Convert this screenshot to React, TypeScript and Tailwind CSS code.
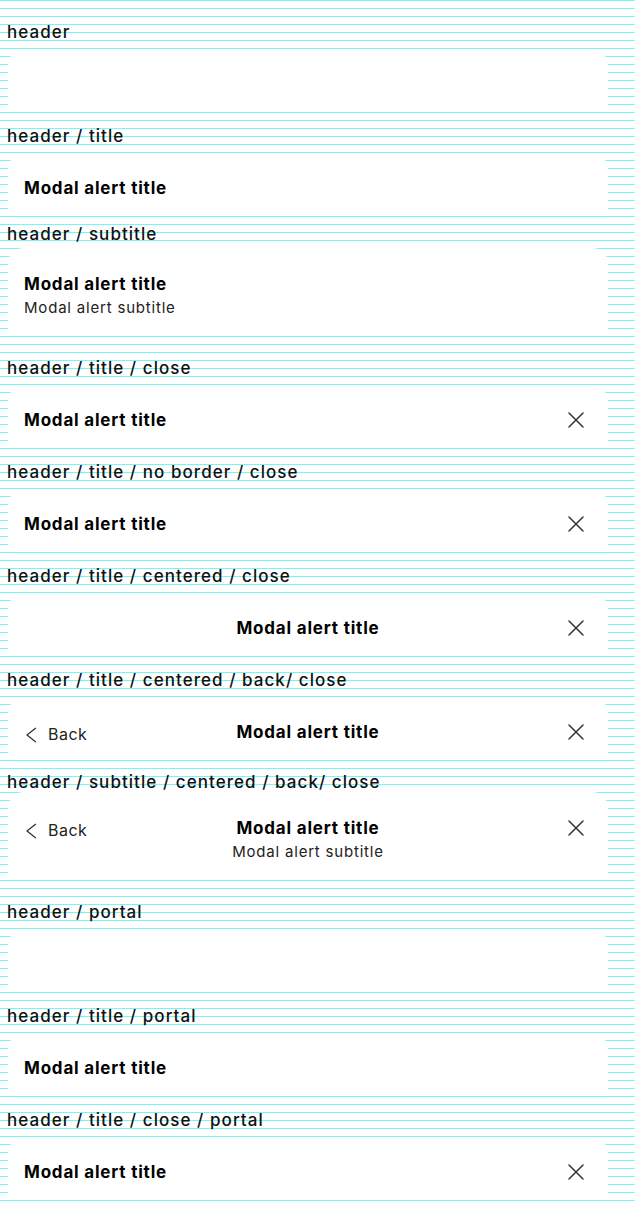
import type { ReactNode } from "react";
import clsx from "clsx";

const font = { fontFamily: "Inter, 'Noto Sans', sans-serif" };

function Label({ children, className }: { children: ReactNode; className?: string }) {
  return (
    <div
      className={clsx(
        "h-4 pl-[7px] text-[17px] leading-4 font-medium tracking-[1.05px] text-[#111] whitespace-nowrap",
        className
      )}
    >
      {children}
    </div>
  );
}

function CloseIcon() {
  return (
    <svg width="16" height="16" viewBox="0 0 16 16" className="block">
      <path d="M1 1L15 15M15 1L1 15" stroke="#333" strokeWidth="1.5" strokeLinecap="round" />
    </svg>
  );
}

function BackButton() {
  return (
    <div className="flex items-center">
      <svg width="14" height="16" viewBox="0 0 14 16" className="block mt-[3px]">
        <path d="M11.5 1.3L3 8L11.5 14.7" fill="none" stroke="#333" strokeWidth="1.3" strokeLinecap="round" strokeLinejoin="round" />
      </svg>
      <span className="ml-[10px] text-[16px] leading-6 tracking-[0.5px] text-[#222] mt-[2px]">Back</span>
    </div>
  );
}

function Panel({ tall, className, children }: { tall?: boolean; className?: string; children?: ReactNode }) {
  return (
    <div
      className={clsx(
        "ml-2 w-[600px] bg-white rounded-t-2xl",
        tall ? "h-[88px] pt-6" : "h-[63px] pt-[23px]",
        className
      )}
    >
      {children}
    </div>
  );
}

function Title({ className }: { className?: string }) {
  return (
    <div className={clsx("text-[17px] leading-6 font-bold tracking-[0.8px] text-black whitespace-nowrap", className)}>
      Modal alert title
    </div>
  );
}

function Subtitle({ className }: { className?: string }) {
  return (
    <div className={clsx("text-[15px] leading-6 tracking-[0.8px] text-[#222] whitespace-nowrap", className)}>
      Modal alert subtitle
    </div>
  );
}

function Row({ left, center, right }: { left?: ReactNode; center: ReactNode; right?: ReactNode }) {
  return (
    <div className="grid grid-cols-[1fr_auto_1fr] items-start px-4">
      <div className="flex justify-start">{left}</div>
      <div className="flex flex-col items-center">{center}</div>
      <div className="flex justify-end pr-2 pt-1">{right}</div>
    </div>
  );
}

export default function App() {
  return (
    <div
      style={font}
      className="w-[635px] h-[1208px] overflow-hidden bg-white bg-[image:linear-gradient(to_bottom,#74f6fb_1px,transparent_1px)] bg-[length:100%_8px]"
    >
      <Label className="mt-6">header</Label>
      <Panel className="mt-[9px]" />

      <Label className="mt-4">header / title</Label>
      <Panel className="mt-[9px] px-4">
        <Title />
      </Panel>

      <Label className="mt-[10px]">header / subtitle</Label>
      <Panel tall className="mt-[6px] px-4">
        <Title />
        <Subtitle />
      </Panel>

      <Label className="mt-6">header / title / close</Label>
      <Panel className="mt-[9px] pl-4 pr-4 flex justify-between items-start">
        <Title />
        <div className="pt-1 pr-2">
          <CloseIcon />
        </div>
      </Panel>

      <Label className="mt-4">header / title / no border / close</Label>
      <Panel className="mt-[9px] pl-4 pr-4 flex justify-between items-start">
        <Title />
        <div className="pt-1 pr-2">
          <CloseIcon />
        </div>
      </Panel>

      <Label className="mt-4">header / title / centered / close</Label>
      <Panel className="mt-[9px]">
        <Row center={<Title />} right={<CloseIcon />} />
      </Panel>

      <Label className="mt-4">header / title / centered / back/ close</Label>
      <Panel className="mt-[9px]">
        <Row left={<BackButton />} center={<Title />} right={<CloseIcon />} />
      </Panel>

      <Label className="mt-[14px]">header / subtitle / centered / back/ close</Label>
      <Panel tall className="mt-[2px]">
        <Row
          left={<BackButton />}
          center={
            <>
              <Title />
              <Subtitle />
            </>
          }
          right={<CloseIcon />}
        />
      </Panel>

      <Label className="mt-6">header / portal</Label>
      <Panel className="mt-[9px]" />

      <Label className="mt-4">header / title / portal</Label>
      <Panel className="mt-[9px] px-4">
        <Title />
      </Panel>

      <Label className="mt-4">header / title / close / portal</Label>
      <Panel className="mt-[9px] pl-4 pr-4 flex justify-between items-start">
        <Title />
        <div className="pt-1 pr-2">
          <CloseIcon />
        </div>
      </Panel>
    </div>
  );
}
